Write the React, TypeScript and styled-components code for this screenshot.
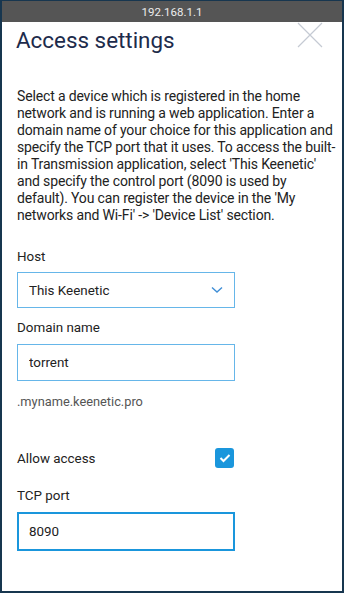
import React from "react";
import styled, { createGlobalStyle } from "styled-components";

const Global = createGlobalStyle`
  html, body { margin: 0; padding: 0; }
  body { font-family: Roboto, "Liberation Sans", Arial, sans-serif; background: #17364f; }
  * { box-sizing: border-box; }
`;

const Frame = styled.div`
  width: 344px;
  height: 593px;
  background: #17364f;
  padding: 1px 2px 2px 2px;
  display: flex;
  flex-direction: column;
`;

const AddressBar = styled.div`
  height: 21px;
  background: #555555;
  color: #ececec;
  font-size: 11.5px;
  display: flex;
  align-items: center;
  justify-content: center;
  flex-shrink: 0;
`;

const Panel = styled.div`
  flex: 1;
  background: #ffffff;
  padding: 0 4px 0 15px;
  display: flex;
  flex-direction: column;
`;

const Header = styled.div`
  display: flex;
  justify-content: space-between;
  align-items: flex-start;
  margin-right: 15px;
`;

const Title = styled.h1`
  margin: 5px 0 0 -1px;
  font-size: 22.4px;
  line-height: 26px;
  font-weight: 400;
  color: #1d2b4b;
`;

const Close = styled.button`
  width: 26px;
  height: 26px;
  padding: 0;
  border: 0;
  background: none;
  display: block;
`;

const Description = styled.p`
  margin: 35px 0 0 0;
  font-size: 14px;
  letter-spacing: -0.15px;
  line-height: 17px;
  color: #222222;
`;

const Label = styled.div<{ $top: number }>`
  margin-top: ${(p) => p.$top}px;
  font-size: 13.4px;
  line-height: 17px;
  color: #222222;
`;

const SelectBox = styled.div`
  margin-top: 7px;
  width: 218px;
  height: 36px;
  border: 1px solid #66b6e9;
  display: flex;
  align-items: center;
  justify-content: space-between;
  padding: 0 11px 0 11px;
  font-size: 13.4px;
  color: #222222;
`;

const TextInput = styled.input<{ $focused?: boolean }>`
  margin-top: 8px;
  width: 218px;
  height: ${(p) => (p.$focused ? 39 : 37)}px;
  border: ${(p) => (p.$focused ? "2px solid #1a96dc" : "1px solid #66b6e9")};
  padding: 0 ${(p) => (p.$focused ? 10 : 11)}px;
  font-family: inherit;
  font-size: 13.4px;
  color: #222222;
  outline: none;
  border-radius: 0;
  background: #fff;
`;

const Hint = styled.div`
  margin-top: 12px;
  font-size: 12.8px;
  line-height: 17px;
  color: #555555;
`;

const CheckRow = styled.div`
  margin-top: 38px;
  width: 218px;
  display: flex;
  align-items: center;
  justify-content: space-between;
  font-size: 13.4px;
  line-height: 17px;
  color: #222222;
`;

const CheckBox = styled.span`
  width: 19px;
  height: 20px;
  border-radius: 3px;
  background: #1a96dc;
  display: flex;
  align-items: center;
  justify-content: center;
  margin-right: 1px;
`;

export default function App() {
  return (
    <>
      <Global />
      <Frame>
        <AddressBar>192.168.1.1</AddressBar>
        <Panel>
          <Header>
            <Title>Access settings</Title>
            <Close aria-label="Close">
              <svg width="26" height="26" viewBox="0 0 26 26">
                <path d="M1 1 L25 25 M25 1 L1 25" stroke="#c5cad3" strokeWidth="1.2" fill="none" />
              </svg>
            </Close>
          </Header>
          <Description>
            Select a device which is registered in the home network and is running a web application. Enter a
            domain name of your choice for this application and specify the TCP port that it uses. To access the
            built-in Transmission application, select 'This Keenetic' and specify the control port (8090 is used by
            default). You can register the device in the 'My networks and Wi-Fi' -&gt; 'Device List' section.
          </Description>
          <Label $top={24}>Host</Label>
          <SelectBox>
            <span>This Keenetic</span>
            <svg width="12" height="8" viewBox="0 0 12 8">
              <path d="M1 1.5 L6 6 L11 1.5" stroke="#3f8ed6" strokeWidth="1.4" fill="none" />
            </svg>
          </SelectBox>
          <Label $top={11}>Domain name</Label>
          <TextInput defaultValue="torrent" />
          <Hint>.myname.keenetic.pro</Hint>
          <CheckRow>
            <span>Allow access</span>
            <CheckBox>
              <svg width="12" height="10" viewBox="0 0 12 10">
                <path d="M1.5 5 L4.5 8 L10.5 2" stroke="#ffffff" strokeWidth="2" fill="none" />
              </svg>
            </CheckBox>
          </CheckRow>
          <Label $top={19}>TCP port</Label>
          <TextInput $focused defaultValue="8090" />
        </Panel>
      </Frame>
    </>
  );
}
